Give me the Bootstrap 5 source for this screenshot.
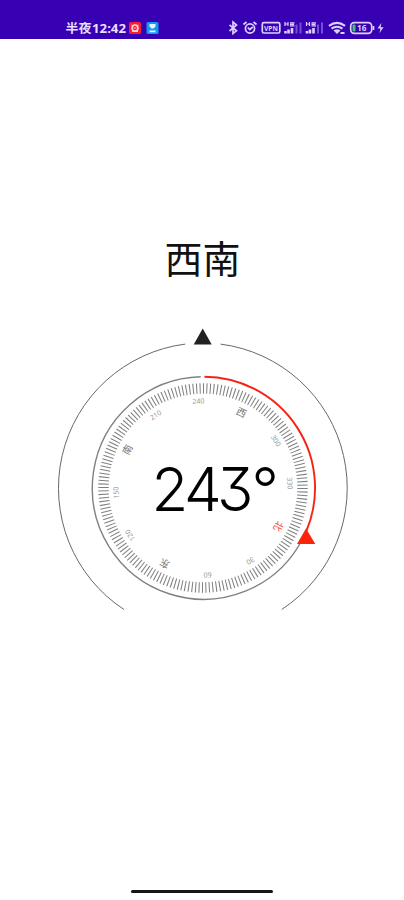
<!DOCTYPE html>
<html lang="zh-CN">
<head>
<meta charset="utf-8">
<meta name="viewport" content="width=device-width, initial-scale=1">
<title>指南针</title>
<link href="https://cdn.jsdelivr.net/npm/bootstrap@5.3.0/dist/css/bootstrap.min.css" rel="stylesheet">
<style>
  body { font-family: "Noto Sans", "Noto Sans CJK SC", sans-serif; }
  .status-bar { background: #3700b3; height: 39px; padding-top: 17px; }
  .status-bar svg { display: block; }
  .heading-name { margin-top: 190px; height: 55px; padding-left: 1px; font: 400 38px/55px "Noto Sans CJK SC", sans-serif; color: #111; }
  .dial { display: block; margin-top: 38px; }
  .deg-text { font-family: Inter, sans-serif; font-weight: 330; font-feature-settings: "cv09" 1; fill: #000; }
  .scale-text { font: 7px "Noto Sans", sans-serif; fill: #959595; text-anchor: middle; }
  .scale-name { font: 10px "Noto Sans CJK SC", sans-serif; fill: #777; }
  .scale-north { fill: #ff3a22; }
  .home-handle { width: 142px; height: 3px; background: #161616; margin: 0 0 7px 131px; }
</style>
</head>
<body class="bg-white overflow-hidden">
<div class="d-flex flex-column vh-100">
  <header class="status-bar">
    <svg width="404" height="22" viewBox="0 17 404 22" fill="none" stroke="#ddd0ff" stroke-width="1.7">
      <g stroke="none" fill="#e8deff" font-weight="700">
        <text x="65.500" y="32.800" font-size="12.500" font-family="Noto Sans CJK SC, sans-serif" textLength="26" lengthAdjust="spacingAndGlyphs">半夜</text>
        <text x="92" y="32.500" font-size="12.500" font-family="Noto Sans, sans-serif" textLength="34" lengthAdjust="spacingAndGlyphs">12:42</text>
      </g>
      <rect x="129" y="22" width="12" height="12" rx="1.500" fill="#f51c35" stroke="none"/>
      <circle cx="135" cy="28" r="3" stroke="#ffd0d4" stroke-width="1.600"/>
      <path d="M131.500 25l2 1.500M138.500 25l-2 1.500M133.500 28h3M132 31.500h6" stroke="#ffd0d4" stroke-width="1"/>
      <rect x="146.500" y="22" width="12" height="12" rx="1.500" fill="#1598f0" stroke="none"/>
      <path d="M149.500 24h6v2.500l-2 2h-2l-2-2zM149.500 30.500h6v1.800h-6z" fill="#e2f5ff" stroke="none"/>
      <!-- bluetooth -->
      <path d="M229.500 24.800l7 6-3.500 2.700v-11.500l3.500 3-7 6"/>
      <!-- alarm -->
      <circle cx="250" cy="28.500" r="4.600"/>
      <path d="M243.500 24.500l3-2.500M256.500 24.500l-3-2.500M247.800 27.500l2 2 3-2.500"/>
      <!-- vpn -->
      <rect x="262.300" y="22.700" width="17.500" height="10.300" rx="1.500"/>
      <text x="264" y="30.800" font-size="7" font-weight="700" font-family="Noto Sans, sans-serif" fill="#ddd0ff" stroke="none" textLength="14" lengthAdjust="spacingAndGlyphs">VPN</text>
      <!-- cellular signals -->
      <g id="cell">
        <path d="M285 22v4M288 22v4M285 24h3M290 25.800h4.500M290 22.800h4.500M290 24.300h4" stroke-width="1.200"/>
        <path d="M285.500 33.500v-2.500M288.500 33.500v-4M292 33.500v-5.500" stroke-width="2.600"/>
        <path d="M296.500 33.500v-9M300.500 33.500v-11" stroke="#7650d4" stroke-width="2"/>
      </g>
      <use href="#cell" x="21.500"/>
      <!-- wifi -->
      <path d="M329 25.800q8-6 16 0M331.500 28.700q5.500-4 11 0" stroke-width="2.100"/>
      <path d="M333.500 30.500q3.500-2.300 7 0l-3.500 3.500z" fill="#ddd0ff" stroke="none"/>
      <path d="M340.500 33h4" stroke-width="2"/>
      <!-- battery -->
      <rect x="350.700" y="22.700" width="21" height="10.600" rx="3.500"/>
      <rect x="352.500" y="24.500" width="3" height="7" rx="1" fill="#43c36a" stroke="none"/>
      <text x="357" y="31.200" font-size="8" font-weight="700" font-family="Noto Sans, sans-serif" fill="#ddd0ff" stroke="none" textLength="9.500" lengthAdjust="spacingAndGlyphs">16</text>
      <path d="M373.500 26v4"/>
      <path d="M381.500 22.800l-4 5.700h3l-1.200 4.800 4.300-6h-3z" fill="#ddd0ff" stroke="none"/>
    </svg>
  </header>

  <main class="flex-grow-1">
    <h1 class="heading-name text-center mb-0">西南</h1>
    <svg class="dial" width="404" height="300" viewBox="0 322 404 300">
      <g fill="none" stroke="#686868">
        <path d="M185.200 344.100A145.200 145.200 0 0 0 124 609.500"/>
        <path d="M220.500 344.100A145.200 145.200 0 0 1 281.700 609.500"/>
        <path d="M200.800 376.700A111.300 111.300 0 1 0 302 540" stroke="#808080" stroke-width="1.400"/>
        <path d="M204.500 376.700A111.300 111.300 0 0 1 306 532" stroke="#f42414" stroke-width="1.900"/>
        <circle cx="203" cy="488" r="99.500" stroke="#808080" stroke-width="10.500" pathLength="360" stroke-dasharray="0.600 1.400"/>
      </g>
      <path d="M202.700 328.500l9 16h-18z" fill="#222"/>
      <path d="M306 528.500l9.300 15.500h-18.300z" fill="#fb2408"/>
      <g class="scale-text" transform="translate(203 488)">
        <text class="scale-name scale-north" transform="rotate(117)" y="-81">北</text>
        <text transform="rotate(147)" y="-84.500">30</text>
        <text transform="rotate(177)" y="-84.500">60</text>
        <text class="scale-name" transform="rotate(207)" y="-81">东</text>
        <text transform="rotate(237)" y="-84.500">120</text>
        <text transform="rotate(267)" y="-84.500">150</text>
        <text class="scale-name" transform="rotate(297)" y="-81">南</text>
        <text transform="rotate(327)" y="-84.500">210</text>
        <text transform="rotate(357)" y="-84.500">240</text>
        <text class="scale-name" transform="rotate(27)" y="-81">西</text>
        <text transform="rotate(57)" y="-84.500">300</text>
        <text transform="rotate(87)" y="-84.500">330</text>
      </g>
      <text class="deg-text" x="151.500 184 217 251.500" y="510.500" font-size="60">243°</text>
    </svg>
  </main>

  <div class="home-handle rounded-pill"></div>
</div>
<script src="https://cdn.jsdelivr.net/npm/bootstrap@5.3.0/dist/js/bootstrap.bundle.min.js"></script>
</body>
</html>
